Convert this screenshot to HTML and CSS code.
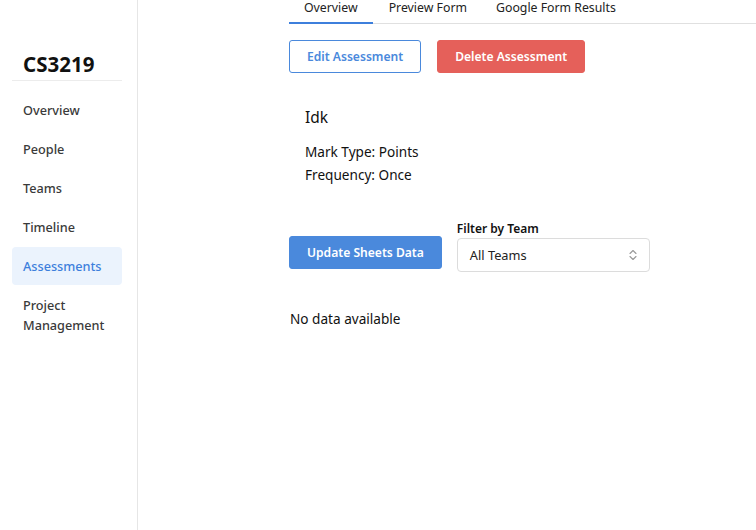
FILE: index.html
```html
<!DOCTYPE html>
<html>
<head>
<meta charset="utf-8">
<link rel="stylesheet" href="styles.css">
</head>
<body>
<div class="app">
  <aside class="sidebar">
    <div class="brand">CS3219</div>
    <nav class="nav">
      <a class="nav-item">Overview</a>
      <a class="nav-item">People</a>
      <a class="nav-item">Teams</a>
      <a class="nav-item">Timeline</a>
      <a class="nav-item active">Assessments</a>
      <a class="nav-item">Project<br>Management</a>
    </nav>
  </aside>
  <main class="main">
    <div class="tabs">
      <div class="tab active">Overview</div>
      <div class="tab">Preview Form</div>
      <div class="tab">Google Form Results</div>
    </div>
    <div class="actions">
      <button class="btn btn-outline">Edit Assessment</button>
      <button class="btn btn-red">Delete Assessment</button>
    </div>
    <div class="details">
      <div class="title">Idk</div>
      <div class="line">Mark Type: Points</div>
      <div class="line">Frequency: Once</div>
    </div>
    <div class="controls">
      <button class="btn btn-blue">Update Sheets Data</button>
      <div class="filter">
        <label class="filter-label">Filter by Team</label>
        <div class="select">
          <span>All Teams</span>
          <svg width="10" height="14" viewBox="0 0 10 14" fill="none" stroke="#999" stroke-width="1.1" stroke-linecap="round" stroke-linejoin="round"><path d="M2 5.5 L5 2.5 L8 5.5"/><path d="M2 8.5 L5 11.5 L8 8.5"/></svg>
        </div>
      </div>
    </div>
    <div class="empty">No data available</div>
  </main>
</div>
</body>
</html>
```
FILE: styles.css
```css
* { box-sizing: border-box; }
html, body { margin: 0; padding: 0; }
body {
  font-family: "Noto Sans", "Open Sans", sans-serif;
  color: #222;
  background: #fff;
  width: 756px;
  height: 530px;
  overflow: hidden;
}
.app { display: flex; height: 530px; }
.sidebar {
  width: 138px;
  flex-shrink: 0;
  border-right: 1px solid #e6e6e6;
  padding: 50px 15px 0 12px;
}
.brand {
  font-size: 20.5px;
  font-weight: 700;
  color: #111;
  padding: 0 0 2px 11px;
  line-height: 28px;
  border-bottom: 1px solid #ececec;
}
.nav { display: flex; flex-direction: column; gap: 1px; margin-top: 10px; }
.nav-item {
  display: block;
  padding: 9px 11px;
  font-size: 12.7px;
  font-weight: 500;
  color: #3a3a3a;
  line-height: 20px;
  border-radius: 4px;
}
.nav-item.active { background: #ebf3fd; color: #3d7fdc; }
.main { flex: 1; padding: 0 0 0 151px; }
.tabs {
  display: flex;
  border-bottom: 1px solid #e0e0e0;
}
.tab {
  font-size: 12.3px;
  line-height: 16px;
  padding: 0 15px 6px 15px;
  color: #222;
  border-bottom: 2px solid transparent;
  margin-bottom: -1px;
}
.tab.active { border-bottom-color: #3d7fdc; }
.tab:nth-child(2) { padding-left: 16px; padding-right: 15px; }
.tab:nth-child(3) { padding-left: 14px; }
.actions { display: flex; gap: 16px; margin-top: 16px; }
.btn {
  font-family: inherit;
  font-size: 12.1px;
  font-weight: 600;
  height: 33px;
  padding: 0 17px;
  border-radius: 3px;
  border: 1px solid transparent;
  cursor: pointer;
}
.btn-outline { background: #fff; border-color: #4a89dc; color: #4a89dc; }
.btn-red { background: #e5605a; color: #fff; border-color: #e5605a; }
.btn-blue { background: #4a89dc; color: #fff; border-color: #4a89dc; height: 33px; margin-bottom: 3px; }
.details { padding: 32px 16px 0 16px; }
.title { font-size: 15.5px; line-height: 24px; margin-bottom: 11px; color: #111; }
.line { font-size: 13.6px; line-height: 23px; color: #111; }
.controls { display: flex; align-items: flex-end; gap: 15px; margin-top: 34px; }
.filter { display: flex; flex-direction: column; }
.filter-label { font-size: 12px; font-weight: 600; line-height: 18px; color: #111; margin-bottom: 0; }
.select {
  width: 193px;
  height: 34px;
  border: 1px solid #dcdcdc;
  border-radius: 4px;
  display: flex;
  align-items: center;
  justify-content: space-between;
  padding: 0 11px 0 12px;
  font-size: 12.8px;
  color: #222;
}
.empty { margin-top: 37px; font-size: 13.6px; color: #111; padding-left: 1px; }
```
